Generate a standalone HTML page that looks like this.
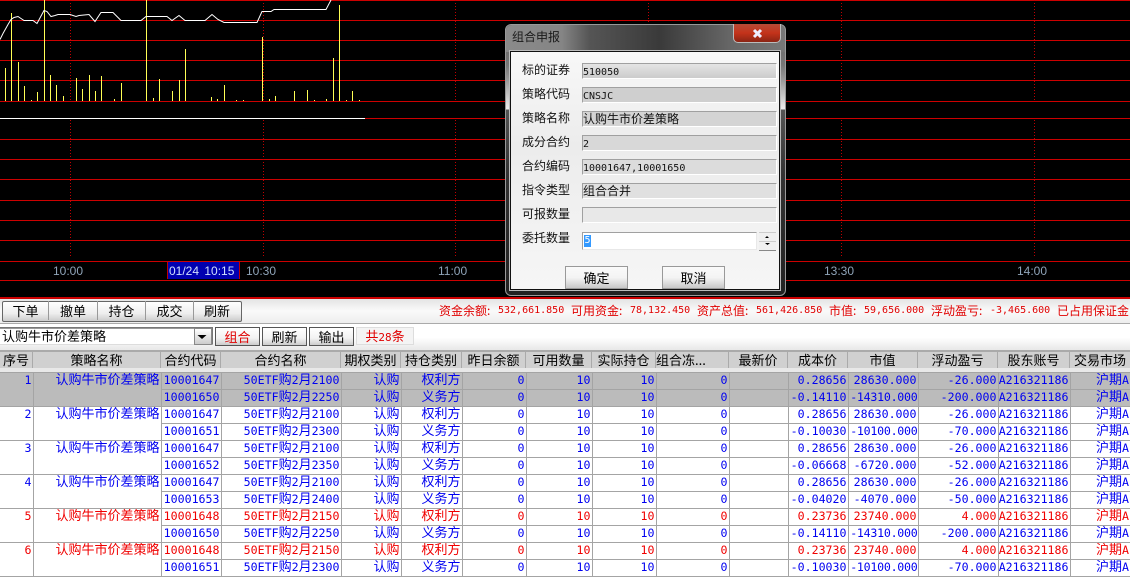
<!DOCTYPE html>
<html><head><meta charset="utf-8">
<style>
html,body{margin:0;padding:0;background:#fff}
#p{position:relative;width:1130px;height:577px;overflow:hidden;background:#fff;font:12px "WenQuanYi Zen Hei","Noto Sans CJK SC",sans-serif;color:#000}
.a{position:absolute;white-space:nowrap}
svg{position:absolute;left:0;top:0}
.t{font:12px/14px "Liberation Sans",sans-serif;color:#8fa4b8;top:264px}
.st{top:304px;color:#e00000;line-height:14px}
.n{font:10px/14px "DejaVu Sans Mono",monospace}
.tb{position:absolute;top:301px;height:19px;line-height:19px;text-align:center;border-right:1px solid #999;font-size:13px}
.btn{position:absolute;top:327px;height:17px;line-height:17px;width:43px;text-align:center;font-size:13px;background:linear-gradient(#fff,#f2f2f2 60%,#ccc);border:1px solid #555}
table{position:absolute;left:0;top:372px;border-collapse:collapse;table-layout:fixed;width:1130px;color:#0000f0;font:11.6px/14px "DejaVu Sans Mono",monospace}
td{height:16px;padding:0 1px 0 0;border:1px solid #a4a4a4;text-align:right;overflow:hidden;white-space:nowrap;vertical-align:top;line-height:14px}
td:first-child{border-left:0}
td:last-child{border-right:0}
td.w{letter-spacing:-.25px;padding:0}
table b{font:13px/0 "WenQuanYi Zen Hei","Noto Sans CJK SC",sans-serif}
tr.s td{background:#bbb}
tr.r td{color:#f00000}
.h{position:absolute;top:352px;height:16px;line-height:16px;text-align:center;font-size:13px;background:#d0d0d0;border-right:1px solid #aaa;overflow:hidden;white-space:nowrap}
.l{left:522px;font-size:12px;line-height:14px;color:#111}
.f{position:absolute;left:582px;width:193px;height:14px;border:1px solid;border-color:#a0a0a0 #fff #fff #a0a0a0;line-height:14px;font-size:12px;color:#111;background:#d3d3d3;white-space:nowrap}
.f i{font:normal 10px/14px "DejaVu Sans Mono",monospace}
</style></head><body><div id="p">

<div class="a" style="left:0;top:0;width:1130px;height:298px;background:#000"></div>
<svg width="1130" height="300" shape-rendering="crispEdges">
<g fill="#cc0000">
<rect x="0" y="0" width="1130" height="1"/><rect x="0" y="20" width="1130" height="1"/><rect x="0" y="40" width="1130" height="1"/><rect x="0" y="60" width="1130" height="1"/><rect x="0" y="80" width="1130" height="1"/><rect x="0" y="101" width="1130" height="1"/><rect x="0" y="118" width="1130" height="1"/><rect x="0" y="139" width="1130" height="1"/><rect x="0" y="159" width="1130" height="1"/><rect x="0" y="179" width="1130" height="1"/><rect x="0" y="200" width="1130" height="1"/><rect x="0" y="220" width="1130" height="1"/><rect x="0" y="240" width="1130" height="1"/><rect x="0" y="261" width="1130" height="1"/><rect x="0" y="280" width="1130" height="1"/><rect x="0" y="297" width="1130" height="2"/>
</g>
<g stroke="#c00000" stroke-dasharray="1 2" stroke-width="1">
<path d="M70.5 0V100M70.5 120V258M263.5 0V100M263.5 120V258M455.5 0V100M455.5 120V258M648.5 0V100M648.5 120V258M841.5 0V100M841.5 120V258M1034.5 0V100M1034.5 120V258"/>
</g>
<rect x="0" y="118" width="365" height="1" fill="#fff"/>
<g stroke="#ffff55" stroke-width="1">
<path d="M5.5 68V101M11.5 13V101M18.5 62V101M24.5 86V101M31.5 100V101M37.5 92V101M44.5 0V101M50.5 75V101M56.5 85V101M63.5 96V101M76.5 78V101M82.5 89V101M89.5 75V101M95.5 91V101M101.5 76V101M114.5 99V101M121.5 83V101M146.5 0V101M153.5 98V101M159.5 79V101M172.5 91V101M179.5 80V101M185.5 49V101M211.5 97V101M217.5 99V101M224.5 85V101M236.5 100V101M243.5 100V101M262.5 37V101M269.5 99V101M275.5 96V101M294.5 91V101M307.5 90V101M314.5 100V101M326.5 99V101M333.5 58V101M339.5 5V101M346.5 100V101M352.5 91V101M359.5 100V101"/>
</g>
<polyline shape-rendering="auto" fill="none" stroke="#fff" stroke-width="1" points="0,39.5 3,33.5 8,24.5 11,19.5 14,17.5 18,16.5 21,18.5 24,20.5 33,20.5 37,23.5 44,10.5 47,11.5 51,16.5 55,15.5 58,14.5 70,14.5 76,16.5 79,15.5 89,14.5 95,21.5 101,12.5 113,12.5 121,20.5 141,20.5 146,16.5 167,16.5 172,20.5 179,15.5 185,20.5 205,20.5 212,14.5 218,19.5 224,22.5 257,22.5 262,11.5 271,11.5 274,9.5 326,9.5 331,0"/>
</svg>

<div class="a t" style="left:53px">10:00</div>
<div class="a" style="left:167px;top:262px;width:71px;height:17px;background:#0000b0;border:1px solid #c00000;border-width:0 1px;box-sizing:content-box"></div>
<div class="a t" style="left:169px;color:#d0e0ff;word-spacing:2px">01/24 10:15</div>
<div class="a t" style="left:246px">10:30</div>
<div class="a t" style="left:438px">11:00</div>
<div class="a t" style="left:824px">13:30</div>
<div class="a t" style="left:1017px">14:00</div>

<!-- toolbar strip -->
<div class="a" style="left:0;top:299px;width:1130px;height:24px;background:linear-gradient(#e4e4e4,#fafafa 50%,#eee)"></div>
<div class="a" style="left:0;top:323px;width:1130px;height:1px;background:#aaa"></div>
<div class="a" style="left:0;top:324px;width:1130px;height:27px;background:linear-gradient(#fff,#fff 50%,#e6e6e6)"></div>
<div class="a" style="left:2px;top:301px;width:238px;height:19px;border:1px solid #666;border-radius:2px;background:linear-gradient(#fff,#eee 60%,#ccc)"></div>
<div class="tb" style="left:3px;width:45px">下单</div>
<div class="tb" style="left:49px;width:48px">撤单</div>
<div class="tb" style="left:98px;width:47px">持仓</div>
<div class="tb" style="left:146px;width:47px">成交</div>
<div class="tb" style="left:194px;width:46px;border:0">刷新</div>

<div class="a st" style="left:439px">资金余额:</div><div class="a st n" style="left:498px">532,661.850</div>
<div class="a st" style="left:571px">可用资金:</div><div class="a st n" style="left:630px">78,132.450</div>
<div class="a st" style="left:697px">资产总值:</div><div class="a st n" style="left:756px">561,426.850</div>
<div class="a st" style="left:829px">市值:</div><div class="a st n" style="left:864px">59,656.000</div>
<div class="a st" style="left:931px">浮动盈亏:</div><div class="a st n" style="left:990px">-3,465.600</div>
<div class="a st" style="left:1057px">已占用保证金</div>

<!-- combo -->
<div class="a" style="left:0;top:327px;width:210px;height:16px;background:#fff;border:1px solid;border-color:#777 #777 #ddd #777;border-left:0;line-height:16px;font-size:13px;padding-left:2px;box-shadow:inset 0 1px 0 #999">认购牛市价差策略</div>
<div class="a" style="left:194px;top:328px;width:16px;height:15px;background:linear-gradient(#fff,#ccc);border:1px solid #888"></div>
<svg width="220" height="350" style="pointer-events:none"><path d="M197.5 335h9l-4.5 4z" fill="#000"/></svg>
<div class="btn" style="left:215px;color:#e00000">组合</div>
<div class="btn" style="left:262px">刷新</div>
<div class="btn" style="left:309px">输出</div>
<div class="a" style="left:356px;top:327px;width:56px;height:16px;line-height:16px;text-align:center;font-size:13px;color:#e00000;background:#f4f4f4;border:1px solid #ddd;box-sizing:content-box">共<span style="font:11px 'DejaVu Sans Mono',monospace">28</span>条</div>

<!-- header -->
<div class="a" style="left:0;top:350px;width:1130px;height:2px;background:#aaa"></div>
<div class="a" style="left:0;top:368px;width:1130px;height:4px;background:#e8e8e8"></div>
<div class="h" style="left:0;width:32px">序号</div>
<div class="h" style="left:33px;width:127px">策略名称</div>
<div class="h" style="left:161px;width:59px">合约代码</div>
<div class="h" style="left:221px;width:119px">合约名称</div>
<div class="h" style="left:341px;width:59px">期权类别</div>
<div class="h" style="left:401px;width:60px">持仓类别</div>
<div class="h" style="left:462px;width:63px">昨日余额</div>
<div class="h" style="left:526px;width:65px">可用数量</div>
<div class="h" style="left:592px;width:63px">实际持仓</div>
<div class="h" style="left:656px;width:72px;text-align:left">组合冻...</div>
<div class="h" style="left:729px;width:58px">最新价</div>
<div class="h" style="left:788px;width:59px">成本价</div>
<div class="h" style="left:848px;width:69px">市值</div>
<div class="h" style="left:918px;width:79px">浮动盈亏</div>
<div class="h" style="left:998px;width:71px">股东账号</div>
<div class="h" style="left:1070px;width:60px;border:0">交易市场</div>

<table>
<colgroup><col style="width:33px"><col style="width:128px"><col style="width:60px"><col style="width:120px"><col style="width:60px"><col style="width:61px"><col style="width:64px"><col style="width:66px"><col style="width:64px"><col style="width:73px"><col style="width:59px"><col style="width:60px"><col style="width:70px"><col style="width:80px"><col style="width:72px"><col style="width:60px"></colgroup>
<tr class="s"><td rowspan="2">1</td><td rowspan="2"><b>认购牛市价差策略</b></td><td>10001647</td><td>50ETF<b>购</b>2<b>月</b>2100</td><td><b>认购</b></td><td><b>权利方</b></td><td>0</td><td>10</td><td>10</td><td>0</td><td></td><td>0.28656</td><td>28630.000</td><td>-26.000</td><td>A216321186</td><td><b>沪期</b>A</td></tr>
<tr class="s"><td>10001650</td><td>50ETF<b>购</b>2<b>月</b>2250</td><td><b>认购</b></td><td><b>义务方</b></td><td>0</td><td>10</td><td>10</td><td>0</td><td></td><td>-0.14110</td><td class="w">-14310.000</td><td>-200.000</td><td>A216321186</td><td><b>沪期</b>A</td></tr>
<tr><td rowspan="2">2</td><td rowspan="2"><b>认购牛市价差策略</b></td><td>10001647</td><td>50ETF<b>购</b>2<b>月</b>2100</td><td><b>认购</b></td><td><b>权利方</b></td><td>0</td><td>10</td><td>10</td><td>0</td><td></td><td>0.28656</td><td>28630.000</td><td>-26.000</td><td>A216321186</td><td><b>沪期</b>A</td></tr>
<tr><td>10001651</td><td>50ETF<b>购</b>2<b>月</b>2300</td><td><b>认购</b></td><td><b>义务方</b></td><td>0</td><td>10</td><td>10</td><td>0</td><td></td><td>-0.10030</td><td class="w">-10100.000</td><td>-70.000</td><td>A216321186</td><td><b>沪期</b>A</td></tr>
<tr><td rowspan="2">3</td><td rowspan="2"><b>认购牛市价差策略</b></td><td>10001647</td><td>50ETF<b>购</b>2<b>月</b>2100</td><td><b>认购</b></td><td><b>权利方</b></td><td>0</td><td>10</td><td>10</td><td>0</td><td></td><td>0.28656</td><td>28630.000</td><td>-26.000</td><td>A216321186</td><td><b>沪期</b>A</td></tr>
<tr><td>10001652</td><td>50ETF<b>购</b>2<b>月</b>2350</td><td><b>认购</b></td><td><b>义务方</b></td><td>0</td><td>10</td><td>10</td><td>0</td><td></td><td>-0.06668</td><td>-6720.000</td><td>-52.000</td><td>A216321186</td><td><b>沪期</b>A</td></tr>
<tr><td rowspan="2">4</td><td rowspan="2"><b>认购牛市价差策略</b></td><td>10001647</td><td>50ETF<b>购</b>2<b>月</b>2100</td><td><b>认购</b></td><td><b>权利方</b></td><td>0</td><td>10</td><td>10</td><td>0</td><td></td><td>0.28656</td><td>28630.000</td><td>-26.000</td><td>A216321186</td><td><b>沪期</b>A</td></tr>
<tr><td>10001653</td><td>50ETF<b>购</b>2<b>月</b>2400</td><td><b>认购</b></td><td><b>义务方</b></td><td>0</td><td>10</td><td>10</td><td>0</td><td></td><td>-0.04020</td><td>-4070.000</td><td>-50.000</td><td>A216321186</td><td><b>沪期</b>A</td></tr>
<tr class="r"><td rowspan="2">5</td><td rowspan="2"><b>认购牛市价差策略</b></td><td>10001648</td><td>50ETF<b>购</b>2<b>月</b>2150</td><td><b>认购</b></td><td><b>权利方</b></td><td>0</td><td>10</td><td>10</td><td>0</td><td></td><td>0.23736</td><td>23740.000</td><td>4.000</td><td>A216321186</td><td><b>沪期</b>A</td></tr>
<tr><td>10001650</td><td>50ETF<b>购</b>2<b>月</b>2250</td><td><b>认购</b></td><td><b>义务方</b></td><td>0</td><td>10</td><td>10</td><td>0</td><td></td><td>-0.14110</td><td class="w">-14310.000</td><td>-200.000</td><td>A216321186</td><td><b>沪期</b>A</td></tr>
<tr class="r"><td rowspan="2">6</td><td rowspan="2"><b>认购牛市价差策略</b></td><td>10001648</td><td>50ETF<b>购</b>2<b>月</b>2150</td><td><b>认购</b></td><td><b>权利方</b></td><td>0</td><td>10</td><td>10</td><td>0</td><td></td><td>0.23736</td><td>23740.000</td><td>4.000</td><td>A216321186</td><td><b>沪期</b>A</td></tr>
<tr><td>10001651</td><td>50ETF<b>购</b>2<b>月</b>2300</td><td><b>认购</b></td><td><b>义务方</b></td><td>0</td><td>10</td><td>10</td><td>0</td><td></td><td>-0.10030</td><td class="w">-10100.000</td><td>-70.000</td><td>A216321186</td><td><b>沪期</b>A</td></tr>
</table>

<!-- dialog -->
<div class="a" style="left:505px;top:24px;width:279px;height:270px;border:1px solid #999;border-radius:6px;background:linear-gradient(#666 0,#777 40px,#999 55px,#eee 84px,#555 85px,#333 150px,#222 100%)"></div>
<div class="a" style="left:506px;top:25px;width:279px;height:27px;border-radius:6px 6px 0 0;background:linear-gradient(90deg,#8a8a8a,#858585 20%,#555 30%,#3a3a3a 55%,#666 80%,#777)"></div>
<div class="a" style="left:510px;top:51px;width:268px;height:237px;border:1px solid #111;background:linear-gradient(#f8f8f8,#ececec 40%,#f6f6f6);box-shadow:0 0 0 1px #bbb"></div>
<div class="a" style="left:512px;top:30px;font-size:12px;line-height:14px;color:#1a1a1a">组合申报</div>
<div class="a" style="left:733px;top:24px;width:46px;height:18px;border:1px solid #bbb;border-top:0;border-radius:0 0 5px 5px;background:linear-gradient(#b54a36,#c4331a 50%,#8a2414);text-align:center"></div>
<svg width="1130" height="300"><path d="M754 30l7 7M761 30l-7 7" stroke="#eef" stroke-width="3" fill="none"/></svg>

<div class="a l" style="top:63px">标的证券</div>
<div class="a l" style="top:87px">策略代码</div>
<div class="a l" style="top:111px">策略名称</div>
<div class="a l" style="top:135px">成分合约</div>
<div class="a l" style="top:159px">合约编码</div>
<div class="a l" style="top:183px">指令类型</div>
<div class="a l" style="top:207px">可报数量</div>
<div class="a l" style="top:231px">委托数量</div>

<div class="f" style="top:63px;background:linear-gradient(#e4e4e4,#ccc)"><i>510050</i></div>
<div class="f" style="top:87px;background:#cfcfcf"><i>CNSJC</i></div>
<div class="f" style="top:111px;background:#d4d4d4">认购牛市价差策略</div>
<div class="f" style="top:135px;background:#d8d8d8"><i>2</i></div>
<div class="f" style="top:159px;background:#dcdcdc"><i>10001647,10001650</i></div>
<div class="f" style="top:183px;background:#e0e0e0">组合合并</div>
<div class="f" style="top:207px;background:#e8e8e8"></div>
<div class="a" style="left:582px;top:232px;width:173px;height:16px;background:#fff;border:1px solid;border-color:#a0a0a0 #e8e8e8 #e8e8e8 #a0a0a0"></div>
<div class="a" style="left:584px;top:235px;width:7px;height:12px;background:#3399ff;color:#fff;font:10px/12px 'DejaVu Sans Mono',monospace;text-align:center">5</div>
<div class="a" style="left:759px;top:232px;width:17px;height:8px;background:#f0f0f0;border-bottom:1px solid #888;border-top:1px solid #ccc"></div>
<div class="a" style="left:759px;top:241px;width:17px;height:8px;background:#f0f0f0;border-bottom:1px solid #888;border-top:1px solid #ccc"></div>
<svg width="1130" height="300"><path d="M765 238h4l-2-2zM765 243h5l-2.5 2z" fill="#000"/></svg>
<div class="a" style="left:565px;top:266px;width:61px;height:21px;line-height:21px;text-align:center;font-size:13px;border:1px solid #999;background:linear-gradient(#fafafa,#f4f4f4 50%,#c8c8c8)">确定</div>
<div class="a" style="left:662px;top:266px;width:61px;height:21px;line-height:21px;text-align:center;font-size:13px;border:1px solid #999;background:linear-gradient(#fafafa,#f4f4f4 50%,#c8c8c8)">取消</div>
</div></body></html>
